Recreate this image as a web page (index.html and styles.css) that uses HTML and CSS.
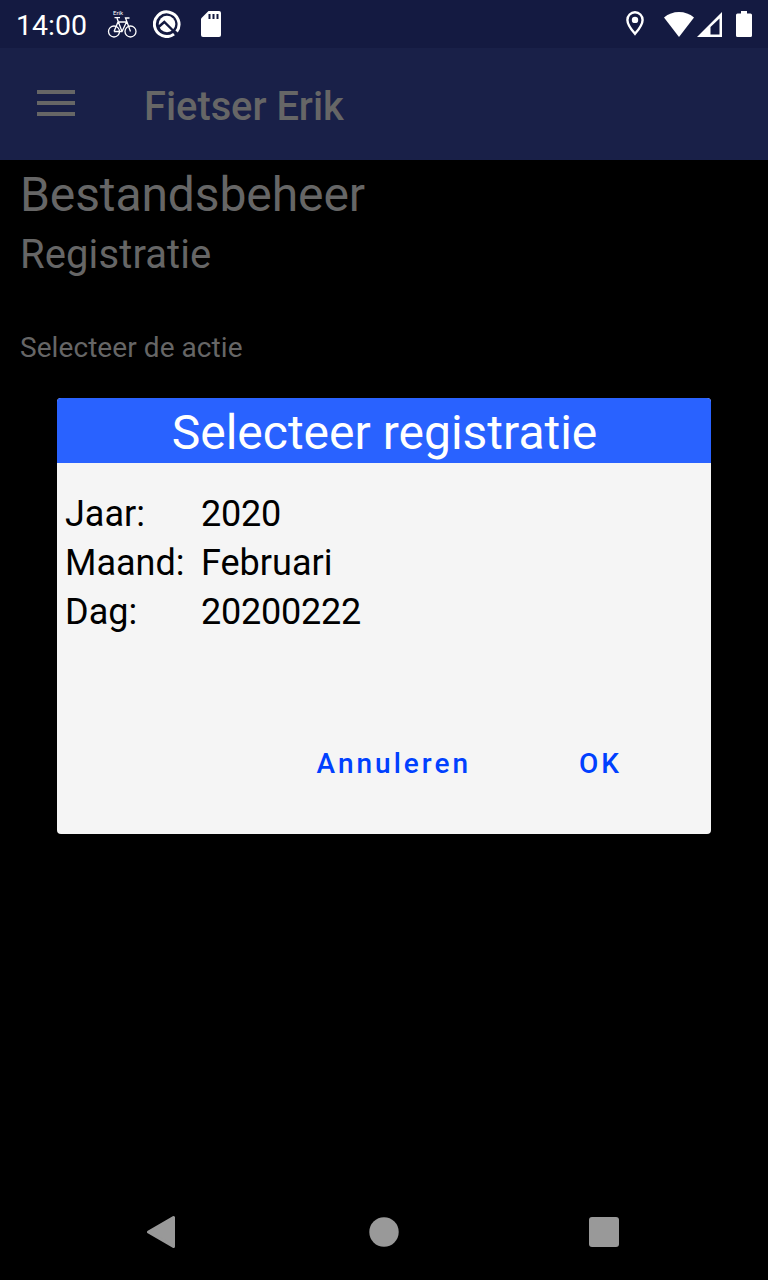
FILE: index.html
```
<!DOCTYPE HTML>
<html lang="nl">
<head>
<meta charset="UTF-8">
<title>Fietser Erik</title>
<link rel="stylesheet" href="styles.css">
</head>
<body>
<div class="status">
	<span class="clock">14:00</span>
	<div class="bike">
		<span class="bike_name">Erik</span>
		<svg width="30" height="22" viewBox="0 0 30 22" fill="none" stroke="#FFF" stroke-width="1.3">
			<circle cx="7" cy="15.500" r="5.500" />
			<circle cx="23.500" cy="15.500" r="5.500" />
			<path d="M7 15.500L11 6H19.500L15 15.500H7M15 15.500L10 2.200M7.500 1.700H13M23.500 15.500L18.500 2H22.500" />
		</svg>
	</div>
	<svg class="app" width="28" height="28" viewBox="0 0 28 28">
		<path d="M23.600 21.500A12.300 12.300 0 1 0 21 24.100" fill="none" stroke="#FFF" stroke-width="3" />
		<circle cx="14" cy="14" r="8.300" fill="#FFF" />
		<path d="M5 17.500L11.300 12L21 21.500" fill="none" stroke="#141A41" stroke-width="2.400" />
	</svg>
	<svg class="card" width="20" height="26" viewBox="0 0 20 26">
		<path d="M7.500 0H18a2 2 0 0 1 2 2V24a2 2 0 0 1-2 2H2a2 2 0 0 1-2-2V7.500z" fill="#FFF" />
		<path d="M8.500 3V8M12.500 3V8M16.500 3V8" stroke="#141A41" stroke-width="2" />
	</svg>
	<svg class="pin" width="18" height="25" viewBox="0 0 18 25">
		<path d="M9 1.300a7.600 7.600 0 0 1 7.600 7.600C16.600 14 9 22.800 9 22.800S1.400 14 1.400 8.900A7.600 7.600 0 0 1 9 1.300z" fill="none" stroke="#FFF" stroke-width="2.400" />
		<circle cx="9" cy="8.900" r="3.200" fill="#FFF" />
	</svg>
	<svg class="wifi" width="30" height="25" viewBox="0 0 30 25">
		<path d="M0 5.500Q6.500 0 15 0T30 5.500L15 25z" fill="#FFF" />
	</svg>
	<svg class="signal" width="25" height="25" viewBox="0 0 25 25">
		<path fill-rule="evenodd" d="M0 25L25 0V25zM13.500 22.500H22.500V6.500L13.500 15z" fill="#FFF" />
	</svg>
	<svg class="battery" width="16" height="26" viewBox="0 0 16 26">
		<path d="M5 0H11V2.500H14.500Q16 2.500 16 4V24.500Q16 26 14.500 26H1.500Q0 26 0 24.500V4Q0 2.500 1.500 2.500H5z" fill="#FFF" />
	</svg>
</div>
<div class="toolbar">
	<div class="menu"><i></i><i></i><i></i></div>
	<h1>Fietser Erik</h1>
</div>
<div class="content">
	<h2>Bestandsbeheer</h2>
	<h3>Registratie</h3>
	<p>Selecteer de actie</p>
</div>
<div class="dialog">
	<h2>Selecteer registratie</h2>
	<dl>
		<dt>Jaar:</dt><dd>2020</dd>
		<dt>Maand:</dt><dd>Februari</dd>
		<dt>Dag:</dt><dd>20200222</dd>
	</dl>
	<div class="buttons">
		<button type="button">Annuleren</button>
		<button type="button">OK</button>
	</div>
</div>
<div class="navbar">
	<svg width="28" height="34" viewBox="0 0 28 34"><path d="M1.500 17L26.500 2.500V31.500z" fill="#999" stroke="#999" stroke-width="3" stroke-linejoin="round" /></svg>
	<svg width="30" height="30" viewBox="0 0 30 30"><circle cx="15" cy="15" r="14.700" fill="#999" /></svg>
	<svg width="30" height="30" viewBox="0 0 30 30"><rect width="30" height="30" rx="3" fill="#999" /></svg>
</div>
</body>
</html>
```

FILE: styles.css
```
html, body, div, dl, dt, dd, h1, h2, h3, p, button { margin:0; padding:0; }
* { box-sizing:border-box; }
body { position:relative; display:flex; flex-direction:column; width:768px; height:1280px; overflow:hidden; font:normal 28px Roboto,"Liberation Sans",sans-serif; color:#666; background-color:#000; }
svg { display:block; flex:none; }
h2, h3 { font-weight:normal; }

.status { display:flex; align-items:flex-start; height:48px; background-color:#141A41; color:#FFF; }
.clock { width:91px; padding-left:16px; font-size:28.500px; line-height:51px; }
.bike { width:30px; margin:9px 0 0 16px; }
.bike_name { display:block; height:7px; padding-left:6px; font-size:6px; line-height:7px; }
.app { margin:10px 0 0 16px; }
.card { margin:11px 0 0 20px; }
.pin { margin:11px 0 0 auto; }
.wifi { margin:12px 0 0 20px; }
.signal { margin:12px 0 0 3px; }
.battery { margin:11px 16px 0 14px; }

.toolbar { display:flex; height:112px; background-color:#192048; }
.menu { display:flex; flex-direction:column; gap:7px; width:38px; margin:42px 69px 0 37px; }
.menu i { height:4px; background-color:#666; }
.toolbar h1 { font-size:39.800px; font-weight:500; line-height:118px; }

.content { flex:1; padding:6px 20px 0; }
.content h2 { font-size:48px; line-height:57px; letter-spacing:-.1px; }
.content h3 { margin-top:8px; font-size:40px; line-height:48px; letter-spacing:.1px; }
.content p { margin-top:52px; font-size:28px; line-height:34px; letter-spacing:.07px; }

.dialog { position:absolute; left:57px; top:398px; width:654px; height:436px; overflow:hidden; color:#000; background-color:#F5F5F5; border-radius:4px; }
.dialog h2 { height:65px; padding:2px 0 0 1px; font-size:48px; line-height:65px; text-align:center; color:#FFF; background-color:#2962FF; }
.dialog dl { display:grid; grid-template-columns:136px 1fr; padding:27px 8px 0; font-size:36px; line-height:49px; }
.dialog dd:first-of-type, .dialog dd:last-of-type { letter-spacing:-.25px; }
.buttons { display:flex; justify-content:flex-end; gap:108px; padding:109px 89px 0 0; }
.buttons button { border:0 none; font:500 28px/36px Roboto,sans-serif; letter-spacing:3px; color:#0040FF; background:none; }

.navbar { display:flex; align-items:center; justify-content:space-between; height:96px; padding:0 149px 0 147px; }
.navbar svg:nth-child(2) { margin-left:4px; }
```
